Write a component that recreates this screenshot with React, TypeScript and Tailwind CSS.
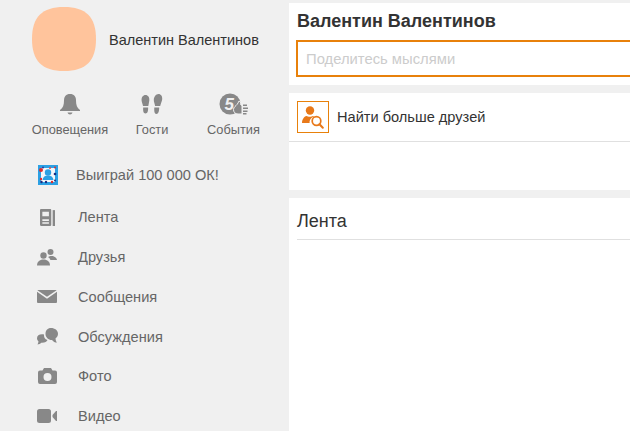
const FONT = "font-['Liberation_Sans',Arial,sans-serif]";

function Bell() {
  return (
    <svg width="20" height="21" viewBox="0 0 20 21" fill="#888">
      <path d="M10 0c4 0 6 2.600 6 6.500 0 4.500 1 7.500 4 9.500v1H0v-1c3-2 4-5 4-9.500C4 2.600 6 0 10 0z" />
      <path d="M7.500 18.500h5c-.3 1.300-1.300 2-2.500 2s-2.200-.7-2.500-2z" />
    </svg>
  );
}

function Feet() {
  return (
    <svg width="22" height="21" viewBox="0 0 22 21" fill="#888">
      <path d="M4.500 1C7 1 8.600 3.300 8.300 6.500 8.100 8.500 7.600 10 7.300 12H2C1.700 10 .8 8.500.6 6.500.3 3.300 2 1 4.500 1z" />
      <path d="M2.200 13.500h4.900c.2 3.200-.4 6-2.600 6s-2.600-2.800-2.300-6z" />
      <path d="M17.500 0c2.500 0 4 2.300 3.700 5.300-.2 2-1.300 4-2 6.700h-5.100c-.4-2.500-1.300-4-1.300-6C12.800 2.800 15 0 17.500 0z" />
      <path d="M13.300 13.500h4.900c.1 3-.7 6.500-2.800 6.500s-2.300-3.300-2.100-6.500z" />
    </svg>
  );
}

function Events() {
  return (
    <svg width="30" height="22" viewBox="0 0 30 22">
      <circle cx="11" cy="11" r="10.500" fill="#888" />
      <text x="5.500" y="17" fontSize="17" fontWeight="700" fontStyle="italic" fill="#f0f0f0" fontFamily="Liberation Sans">5</text>
      <path d="M20 8l1.500 1c0 2-.5 3 1.500 3.500V21h-4c-3 0-4.500-2-4.500-4.500 0-2.500 2.500-3.500 3.500-5 .7-1 1.500-2 2-3.500z" fill="#888" stroke="#f0f0f0" strokeWidth="1" />
      <path d="M24 11.500h4v1.500h-4zM24 14.500h5V16h-5zM24 17.500h4.500V19H24zM24 20h3.500v1.500H24z" fill="#888" />
    </svg>
  );
}

function Feed() {
  return (
    <svg width="16" height="15" viewBox="0 0 16 15" fill="#888" className="h-[17px] w-[15px]" preserveAspectRatio="none">
      <path fillRule="evenodd" d="M1 0h10a1 1 0 0 1 1 1v13a1 1 0 0 1-1 1H1a1 1 0 0 1-1-1V1a1 1 0 0 1 1-1zm1.500 2.500v4h7v-4zm0 6.500v1.500h7V9zm0 2.700v1.300h7v-1.300z" />
      <rect x="13.500" y="1" width="2.500" height="14" />
    </svg>
  );
}

function Friends() {
  return (
    <svg width="20" height="17" viewBox="0 0 20 17" fill="#888">
      <circle cx="13.500" cy="3" r="3" />
      <path d="M11 8c1-1 4-1.400 5.500-.8 2 .7 3.200 2 3.500 3.800h-6.500c-.5-1.200-1.300-2.200-2.500-3z" />
      <circle cx="6.500" cy="6.500" r="3.200" />
      <path d="M0 16.500c0-3.500 2.500-6 6.500-6s6.500 2.500 6.500 6z" />
    </svg>
  );
}

function Mail() {
  return (
    <svg width="20" height="13" viewBox="0 0 20 13" fill="#888">
      <path d="M1 0h18a1 1 0 0 1 .6.200L10 6.800.4.200A1 1 0 0 1 1 0z" />
      <path d="M0 1.700l10 7 10-7V12a1 1 0 0 1-1 1H1a1 1 0 0 1-1-1z" />
    </svg>
  );
}

function Chat() {
  return (
    <svg width="21" height="17" viewBox="0 0 21 17" fill="#888">
      <path d="M14 0c3.800 0 7 2.400 7 5.800 0 2.200-1 3.700-2.500 4.700.1 1.500.6 3 1.500 4-2 0-3.800-.9-5-2.600-3.500.1-6.500-2.600-6.500-6C8.500 2.500 10.500 0 14 0z" />
      <path d="M5 6.200c-3 0-5 1.600-5 4 0 1.400.7 2.500 1.500 3.200-.1 1-.5 2.200-1 3 1.500-.1 2.800-.8 3.700-1.700C7.500 15 10 13.500 10.500 12 7.800 11.500 6.700 8.800 7 6.500c-.6-.2-1.300-.3-2-.3z" />
    </svg>
  );
}

function Camera() {
  return (
    <svg width="19" height="16" viewBox="0 0 19 16" fill="#888">
      <path fillRule="evenodd" d="M6 0h7l1.500 2.500H17a2 2 0 0 1 2 2V14a2 2 0 0 1-2 2H2a2 2 0 0 1-2-2V4.500a2 2 0 0 1 2-2h2.500zm3.500 5a4 4 0 1 0 0 8 4 4 0 0 0 0-8z" />
    </svg>
  );
}

function Video() {
  return (
    <svg width="21" height="14" viewBox="0 0 21 14" fill="#888">
      <rect width="14" height="14" rx="2.500" />
      <path d="M20 2v10h-1l-3.500-4V6L19 2z" />
    </svg>
  );
}

function Promo() {
  return (
    <svg width="20" height="20" viewBox="0 0 20 20">
      <rect width="20" height="20" fill="#2ba0e4" />
      <rect x="3" y="3" width="14" height="14" fill="#f4f6fa" />
      <circle cx="10" cy="7.500" r="3.200" fill="#2ba0e4" />
      <path d="M4.500 15c.4-3.200 2.600-4.500 5.500-4.500s5.100 1.300 5.500 4.500z" fill="#2ba0e4" />
      <circle cx="3" cy="5" r="2" fill="#e02b2b" />
      <circle cx="5" cy="2.500" r="1" fill="#2d3a9a" />
      <circle cx="12" cy="3" r="1" fill="#d85050" />
      <circle cx="17" cy="2.500" r="1" fill="#e02b2b" />
      <circle cx="17" cy="9" r="1.300" fill="#1c2c80" />
      <circle cx="3" cy="14" r="1.200" fill="#e02b2b" />
      <circle cx="3.500" cy="17" r="1.200" fill="#1c2c80" />
      <circle cx="8" cy="17" r="1.200" fill="#1c2c80" />
      <circle cx="14" cy="17" r="1.200" fill="#e02b2b" />
      <circle cx="17" cy="15.500" r="1" fill="#1c2c80" />
    </svg>
  );
}

function FindFriends() {
  return (
    <svg width="22" height="23" viewBox="0 0 22 23" fill="#e8791a">
      <circle cx="8" cy="4.500" r="4.200" />
      <path d="M0 17c0-3.500 2-6.500 4.500-7 1.500 1 5 1 6.500 0 .6.100 1.100.3 1.600.6-3.200.7-5.300 3.200-5 6.400z" />
      <circle cx="14.500" cy="15" r="4.300" fill="none" stroke="#e8791a" strokeWidth="1.700" />
      <path d="M17.500 18.200l3.300 3.600" fill="none" stroke="#e8791a" strokeWidth="2" strokeLinecap="round" />
    </svg>
  );
}

const shortcuts = [
  { label: "Оповещения", icon: <Bell />, width: "w-[78px] ml-[31px]" },
  { label: "Гости", icon: <Feet />, width: "w-[32px] ml-[26px] pl-[2px]" },
  { label: "События", icon: <Events />, width: "w-[51px] ml-[40px] pl-[2px]" },
];

const menu = [
  { label: "Лента", icon: <Feed /> },
  { label: "Друзья", icon: <Friends /> },
  { label: "Сообщения", icon: <Mail /> },
  { label: "Обсуждения", icon: <Chat /> },
  { label: "Фото", icon: <Camera /> },
  { label: "Видео", icon: <Video /> },
];

export default function App() {
  return (
    <div className={`flex h-[431px] w-[630px] overflow-hidden bg-[#f0f0f0] ${FONT}`}>
      <aside className="w-[289px] shrink-0">
        <div className="flex items-center pl-[32px] pt-[7px]">
          <svg width="64" height="64" viewBox="0 0 64 64" className="shrink-0">
            <path d="M32 0C54 0 64 10 64 32S54 64 32 64 0 54 0 32 10 0 32 0z" fill="#ffc49c" />
          </svg>
          <span className="ml-[13px] mt-[2px] whitespace-nowrap text-[14.500px] leading-4 text-[#333]">Валентин Валентинов</span>
        </div>

        <div className="mt-[22px] flex">
          {shortcuts.map((s) => (
            <div key={s.label} className={`flex flex-col items-center ${s.width}`}>
              <div className="flex h-[22px] items-center justify-center">{s.icon}</div>
              <span className="mt-[8px] whitespace-nowrap text-[12.800px] leading-[14px] text-[#666]">{s.label}</span>
            </div>
          ))}
        </div>

        <div className="mt-[28px] flex items-center pl-[38px]">
          <Promo />
          <span className="ml-[18px] text-[14.600px] leading-4 text-[#666]">Выиграй 100 000 ОК!</span>
        </div>

        <nav className="mt-[12.400px] flex flex-col">
          {menu.map((m) => (
            <div key={m.label} className="flex h-[39.800px] items-center pl-[36px]">
              <div className="mr-[20px] flex w-[22px] justify-center">{m.icon}</div>
              <span className="text-[14.600px] leading-4 text-[#666]">{m.label}</span>
            </div>
          ))}
        </nav>
      </aside>

      <main className="flex min-w-0 flex-1 flex-col gap-[8px] pt-[3px]">
        <section className="h-[82px] overflow-hidden bg-white pl-[7px] pt-[8px]">
          <h1 className="pl-[1px] text-[18px] font-bold leading-[20px] text-[#333]">Валентин Валентинов</h1>
          <div className="mt-[9px] flex h-[37px] w-[400px] items-center border-2 border-[#e8810b] pl-[8px] pt-[1px] text-[14.800px] text-[#ccc]">
            Поделитесь мыслями
          </div>
        </section>

        <section className="h-[97px] bg-white">
          <div className="flex h-[49px] items-start border-b border-[#e0e0e0] pl-[8px] pt-[8px]">
            <div className="flex h-[32px] w-[32px] items-center justify-center border border-[#e8810b]">
              <FindFriends />
            </div>
            <span className="ml-[8px] mt-[8px] text-[14.600px] leading-4 text-[#333]">Найти больше друзей</span>
          </div>
        </section>

        <section className="flex-1 bg-white pl-[8px]">
          <h2 className="flex h-[42px] items-center border-b border-[#e0e0e0] pt-[6px] text-[18px] font-normal text-[#333]">Лента</h2>
        </section>
      </main>
    </div>
  );
}
